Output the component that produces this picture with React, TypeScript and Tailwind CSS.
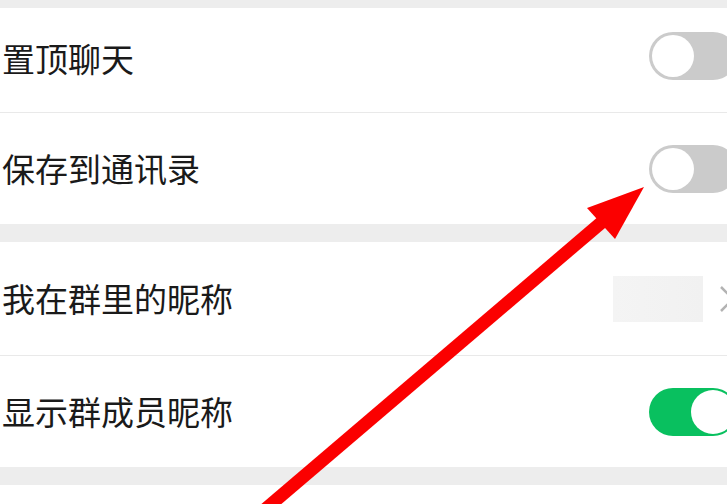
import React from "react";

function Toggle({ on }: { on: boolean }) {
  return on ? (
    <div className="relative h-[48px] w-[88px] shrink-0 rounded-full bg-[#09c05f]">
      <div className="absolute right-[2px] top-[2px] h-[44px] w-[44px] rounded-full bg-white" />
    </div>
  ) : (
    <div className="relative h-[48px] w-[88px] shrink-0 rounded-full bg-[#cbcbcb]">
      <div className="absolute left-[3px] top-[3px] h-[42px] w-[42px] rounded-full bg-white" />
    </div>
  );
}

export default function App() {
  return (
    <div
      className="relative h-[504px] w-[727px] overflow-hidden bg-white text-[#1a1a1a]"
      style={{ fontFamily: '"Noto Sans CJK SC", "Noto Sans", sans-serif' }}
    >
      <div className="h-[8px] bg-[#ededed]" />
      <div className="flex h-[104px] items-center bg-white pl-[2px]">
        <span className="mb-[3px] flex-1 text-[33px] leading-none">置顶聊天</span>
        <div className="mb-[8px] mr-[-10px]">
          <Toggle on={false} />
        </div>
      </div>
      <div className="h-px bg-[#e9e9e9]" />
      <div className="flex h-[111px] items-center bg-white pl-[2px]">
        <span className="flex-1 text-[33px] leading-none">保存到通讯录</span>
        <div className="mr-[-10px]">
          <Toggle on={false} />
        </div>
      </div>
      <div className="h-[18px] bg-[#ededed]" />
      <div className="flex h-[113px] items-center bg-white pl-[2px]">
        <span className="flex-1 text-[33px] leading-none">我在群里的昵称</span>
        <div className="h-[46px] w-[90px] bg-gradient-to-r from-[#f4f4f4] to-[#f1f1f1]" />
        <svg className="ml-[16px] mr-[-10px] shrink-0" width="18" height="28" viewBox="0 0 18 28">
          <polyline points="2,2 14,14 2,26" fill="none" stroke="#b3b3b3" strokeWidth="2.5" />
        </svg>
      </div>
      <div className="h-px bg-[#e9e9e9]" />
      <div className="flex h-[111px] items-center bg-white pl-[2px]">
        <span className="flex-1 text-[33px] leading-none">显示群成员昵称</span>
        <div className="mr-[-10px]">
          <Toggle on={true} />
        </div>
      </div>
      <div className="h-[18px] bg-[#ededed]" />
      <div className="h-[19px] bg-white" />

      <svg className="pointer-events-none absolute left-0 top-0" width="727" height="504" viewBox="0 0 727 504">
        <line x1="262" y1="512" x2="602" y2="222" stroke="#fb0000" strokeWidth="13" />
        <polygon points="644,187 587,208 615,239" fill="#fb0000" />
      </svg>
    </div>
  );
}
